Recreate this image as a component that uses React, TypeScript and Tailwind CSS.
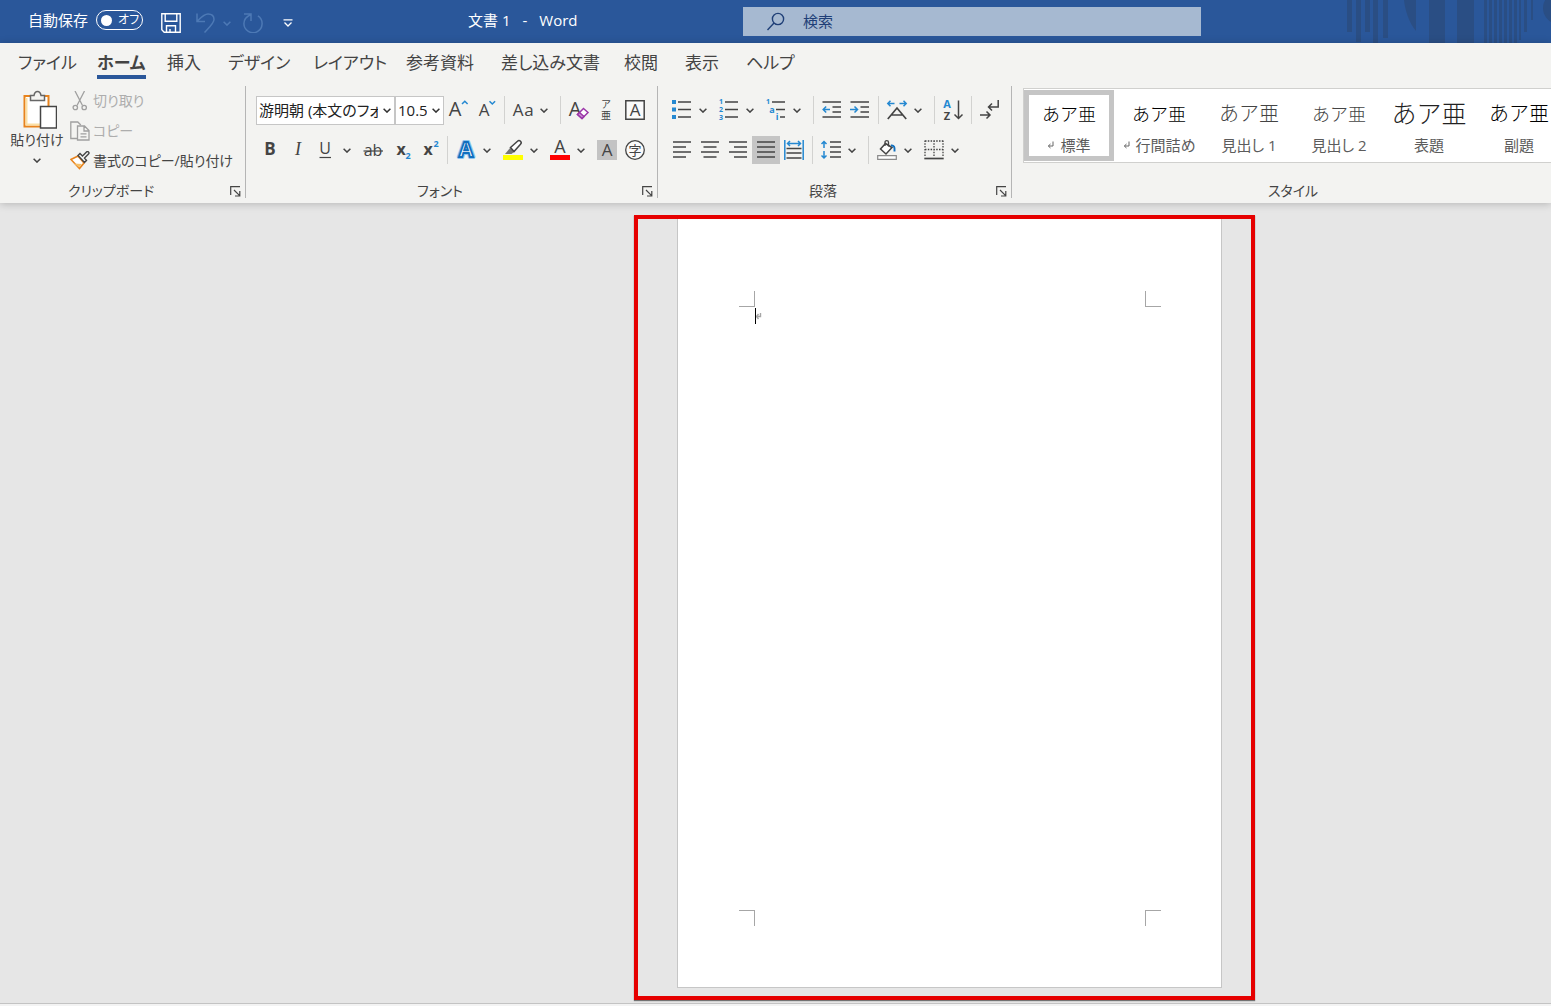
import type { ReactNode } from "react";

const tabs = [
  { name: "ファイル", width: "w-[79px]" },
  { name: "ホーム", width: "w-[70px]" },
  { name: "挿入", width: "w-[61px]" },
  { name: "デザイン", width: "w-[85px]" },
  { name: "レイアウト", width: "w-[93px]" },
  { name: "参考資料", width: "w-[95px]" },
  { name: "差し込み文書", width: "w-[123px]" },
  { name: "校閲", width: "w-[61px]" },
  { name: "表示", width: "w-[61px]" },
  { name: "ヘルプ", width: "w-[61px]" },
];

const styles = [
  { name: "標準", mark: true, sample: "text-[18px] text-black" },
  { name: "行間詰め", mark: true, sample: "text-[18px] text-black" },
  { name: "見出し 1", mark: false, sample: "text-[20px] text-[#444]" },
  { name: "見出し 2", mark: false, sample: "text-[18px] text-[#444]" },
  { name: "表題", mark: false, sample: "text-[25px] text-[#222]" },
  { name: "副題", mark: false, sample: "text-[20px] text-black" },
];

const INK = "#444444";
const BLUE = "#2488d1";

const Icon = ({ children }: { children: ReactNode }) => (
  <svg
    className="size-5 shrink-0 overflow-visible"
    viewBox="0 0 20 20"
    fill="none"
    stroke={INK}
    strokeWidth="1.5"
  >
    {children}
  </svg>
);

type GlyphProps = {
  x: number;
  y: number;
  size: number;
  fill?: string;
  weight?: number;
  children: string;
};

const Glyph = ({ x, y, size, fill = INK, weight = 400, children }: GlyphProps) => (
  <text x={x} y={y} fontSize={size} fontWeight={weight} fill={fill} stroke="none" textAnchor="middle">
    {children}
  </text>
);

const Chevron = () => (
  <svg className="h-[5px] w-2 shrink-0" viewBox="0 0 8 5" fill="none" stroke="currentColor" strokeWidth="1.5">
    <path d="M.6.8 4 4.1 7.4.8" />
  </svg>
);

const Tool = ({ label, active, children }: { label: string; active?: boolean; children: ReactNode }) => (
  <button
    aria-label={label}
    className={
      active
        ? "flex h-7 w-7 shrink-0 items-center justify-center bg-[#c5c5c5]"
        : "flex h-7 w-7 shrink-0 items-center justify-center hover:bg-[#dcdcdc]"
    }
  >
    {children}
  </button>
);

// icon with a drop-down arrow on its right
const SplitTool = ({ label, children }: { label: string; children: ReactNode }) => (
  <button
    aria-label={label}
    className="flex h-7 w-[47px] shrink-0 items-center gap-[7px] pl-1 text-[#444] hover:bg-[#dcdcdc]"
  >
    {children}
    <Chevron />
  </button>
);

const Separator = () => <div className="mx-1 h-7 w-px shrink-0 bg-[#d2d2d0]" />;

const Launcher = ({ label }: { label: string }) => (
  <button aria-label={label} className="mr-1 flex size-[11px] shrink-0">
    <svg viewBox="0 0 11 11" className="size-[11px]" fill="none" stroke={INK} strokeWidth="1.2">
      <path d="M.7 9V.7H10M4 4l5.4 5.4M9.8 5v5H5" />
    </svg>
  </button>
);

type GroupProps = { title: string; className: string; launcher?: boolean; children: ReactNode };

const Group = ({ title, className, launcher, children }: GroupProps) => (
  <section className={className}>
    <div className="h-[94px]">{children}</div>
    <div className="flex h-[22px] items-center text-[14px] leading-[22px] text-[#444]">
      <h2 className="flex-1 pr-2 text-center">{title}</h2>
      {launcher && <Launcher label={title + "の設定"} />}
    </div>
  </section>
);

const Combo = ({ label, value, className }: { label: string; value: string; className: string }) => (
  <div className={className}>
    <select
      aria-label={label}
      className="h-full w-full appearance-none border border-[#c6c6c6] bg-white pr-4 pl-[2px] text-[15px] text-[#222]"
    >
      <option>{value}</option>
    </select>
    <span className="pointer-events-none absolute inset-y-0 right-1 flex items-center text-[#333]">
      <Chevron />
    </span>
  </div>
);

const ReturnMark = () => (
  <svg className="h-2 w-[7px] shrink-0" viewBox="0 0 7 8" fill="none" stroke="#666" strokeWidth="1">
    <path d="M6 .5v4.500H1.500M3.500 3 1.300 5l2.200 2" />
  </svg>
);

const TitleBar = () => (
  <header className="flex h-[43px] overflow-hidden bg-[#2a579a] text-[15px] text-white">
    <div className="flex w-[468px] shrink-0 items-center pb-[3px] pl-7">
      <label htmlFor="autosave" className="w-[68px] leading-5">
        自動保存
      </label>
      <button
        id="autosave"
        role="switch"
        aria-checked="false"
        className="flex h-5 w-[47px] items-center gap-[6px] rounded-full border border-white pl-1 text-[12px] leading-[18px] whitespace-nowrap"
      >
        <span className="size-[11px] shrink-0 rounded-full bg-white" />
        オフ
      </button>
      <div className="ml-[18px] flex items-center pt-[6px]">
        <button aria-label="上書き保存">
          <svg className="h-5 w-5" viewBox="0 0 20 20" fill="none" stroke="#fff" strokeWidth="1.4">
            <path d="M.8.8h18.400v18.400H3.200L.8 16.800zM4.200.8v7.500h11.600V.8M5.500 19v-6.300h9V19M9 19v-3" />
          </svg>
        </button>
        <button aria-label="元に戻す" className="ml-[15px] flex items-center gap-[7px] text-[#4d79b5]">
          <svg className="h-5 w-5" viewBox="0 0 20 20" fill="none" stroke="currentColor" strokeWidth="1.5">
            <path d="M1 .5v8h8M1.300 8.200C5 4.500 8 1 12 1c4 0 6 2.500 6 5.500 0 3.500-3.500 6.500-9.500 13" />
          </svg>
          <Chevron />
        </button>
        <button aria-label="やり直し" className="ml-3 text-[#4d79b5]">
          <svg className="h-5 w-5" viewBox="0 0 20 20" fill="none" stroke="currentColor" strokeWidth="1.5">
            <path d="M1 .9h7v7M7.800 1.500C3.500 3.500.9 6.800.9 10.500a9.100 9.100 0 1 0 14-7.600" />
          </svg>
        </button>
        <button aria-label="クイック アクセスのカスタマイズ" className="ml-5">
          <svg className="h-2 w-[10px]" viewBox="0 0 10 8" fill="none" stroke="#fff" strokeWidth="1.3">
            <path d="M.5.8h9M1.500 3.500 5 7l3.500-3.500" />
          </svg>
        </button>
      </div>
    </div>
    <h1 className="flex w-[275px] shrink-0 gap-3 self-center pb-[3px] leading-5">
      <span>文書 1</span>
      <span>-</span>
      <span>Word</span>
    </h1>
    <div className="flex h-[29px] w-[458px] shrink-0 items-center gap-4 self-center bg-[#a6b9d1] pl-6 text-[#1f3f77]">
      <svg className="h-5 w-5 shrink-0" viewBox="0 0 20 20" fill="none" stroke="#1f3f77" strokeWidth="1.4">
        <circle cx="11" cy="7" r="5.600" />
        <path d="M7 11 .5 18" />
      </svg>
      <input
        aria-label="検索"
        placeholder="検索"
        className="w-full bg-transparent text-[15px] outline-none placeholder:text-[#1f3f77]"
      />
    </div>
    <svg className="ml-auto h-[43px] w-[204px] shrink-0" viewBox="0 0 204 43" fill="#2a4e84">
      <path d="M0 0h5v32H0zM9 0h5v42H9zM18 0h5v32h-5zM26 0h5v43h-5zM36 0h5v38h-5z" />
      <path d="M57 0h12v31C62 23 58 10 57 0zM82 0h16v43H82zM110 0h17v43h-17z" />
      <path d="M137 0h3v43h-3zM142 0h3v43h-3zM147 0h3v43h-3zM152 0h3v43h-3zM157 0h3v43h-3zM162 0h3v43h-3zM167 0h3v43h-3z" />
      <path d="M172 0h2v40h-2zM177 0h3v32h-3zM184 0h2v20h-2z" />
      <circle cx="212" cy="8" r="16" />
    </svg>
  </header>
);

const ClipboardGroup = () => (
  <Group title="クリップボード" launcher className="w-[246px] shrink-0 border-r border-[#b5b5b5]">
    <div className="flex text-[14px] text-[#444]">
      <button className="flex w-[70px] flex-col items-center pt-1 pl-1 leading-5">
        <svg className="size-10" viewBox="-5 0 40 40" fill="none">
          <path d="M2.500 6h24v30.500h-24z" fill="#fff" stroke="#e8831d" strokeWidth="2" />
          <path d="M4.500 8v26.500H18" stroke="#fbe0a5" strokeWidth="2" />
          <path d="M8.500 5.500h3.500c.5-3 2.500-4 3.500-4s3 1 3.500 4h3.500v5h-14z" fill="#f3f3f1" stroke="#666" strokeWidth="1.500" />
          <path d="M18.500 16.500h16v21.500h-16z" fill="#fff" stroke="#444" strokeWidth="1.500" />
        </svg>
        <span className="whitespace-nowrap">貼り付け</span>
        <span className="flex h-5 items-center">
          <Chevron />
        </span>
      </button>
      <div className="flex flex-col leading-[30px]">
        <button disabled className="flex h-[30px] items-center gap-[3px] text-[#adadad]">
          <svg className="size-5" viewBox="0 0 20 20" fill="none" stroke="#a0a0a0" strokeWidth="1.300">
            <path d="M5 0l7.500 14.500M14.500 0 7 14.500" />
            <circle cx="5.300" cy="16.500" r="2.200" />
            <circle cx="14.200" cy="16.500" r="2.200" />
          </svg>
          切り取り
        </button>
        <button disabled className="flex h-[30px] items-center gap-[3px] text-[#adadad]">
          <svg className="size-5" viewBox="0 0 20 20" fill="none" stroke="#a0a0a0" strokeWidth="1.300">
            <path d="M7 17.500H.8V1h7l3 3" />
            <path d="M7.500 5h7l4.500 4.500V19H7.500zM14 5v5h5M10.500 12.800h6M10.500 15.800h6" />
          </svg>
          コピー
        </button>
        <button className="flex h-[30px] items-center gap-[3px]">
          <svg className="size-5" viewBox="0 0 20 20" fill="none">
            <path d="M8 5 1 8.500l8.500 9L14 12z" fill="#fff" stroke="#e8831d" strokeWidth="1.600" />
            <path d="M4 12.500l8 .5-3 3.500z" fill="#f5c06a" />
            <path d="M8 4.500 10 2.500l2.500 2.500 4-4a1.300 1.300 0 0 1 2 2L14.500 7l2 2.500-2 2z" fill="#f3f3f1" stroke="#444" strokeWidth="1.400" />
          </svg>
          書式のコピー/貼り付け
        </button>
      </div>
    </div>
  </Group>
);

const FontGroup = () => (
  <Group title="フォント" launcher className="w-[412px] shrink-0 border-r border-[#b5b5b5]">
    <div className="flex flex-col gap-3 pt-[10px] pl-[10px]">
      <div className="flex h-7 items-center">
        <Combo label="フォント" value="游明朝 (本文のフォント)" className="relative h-[29px] w-[139px] shrink-0" />
        <Combo label="フォント サイズ" value="10.5" className="relative h-[29px] w-[49px] shrink-0" />
        <Tool label="フォント サイズの拡大">
          <Icon>
            <Glyph x={7} y={16} size={20}>A</Glyph>
            <path d="M14 4l2.800-2.800L19.600 4" stroke={BLUE} />
          </Icon>
        </Tool>
        <Tool label="フォント サイズの縮小">
          <Icon>
            <Glyph x={8} y={16} size={17}>A</Glyph>
            <path d="M13.500 1.200 16.300 4l2.800-2.800" stroke={BLUE} />
          </Icon>
        </Tool>
        <Separator />
        <SplitTool label="文字種の変換">
          <Icon>
            <Glyph x={5} y={16} size={17}>A</Glyph>
            <Glyph x={16} y={16} size={17}>a</Glyph>
          </Icon>
        </SplitTool>
        <Separator />
        <Tool label="すべての書式をクリア">
          <Icon>
            <Glyph x={6} y={16} size={20}>A</Glyph>
            <path d="M14.500 8.500l4.500 4-6 6-4.500-4z" fill="#fff" stroke="#9b35a8" />
            <path d="M10.500 12.500l4.500 4-2 2-4.500-4z" fill="#c98fd1" stroke="#9b35a8" />
          </Icon>
        </Tool>
        <Tool label="ルビ">
          <Icon>
            <Glyph x={9} y={8} size={10}>ア</Glyph>
            <Glyph x={9} y={19} size={10}>亜</Glyph>
          </Icon>
        </Tool>
        <Tool label="囲み線">
          <Icon>
            <path d="M.8.8h18.400v18.400H.8z" fill="#fafafa" />
            <Glyph x={10} y={16} size={17}>A</Glyph>
          </Icon>
        </Tool>
      </div>
      <div className="flex h-7 items-center">
        <Tool label="太字">
          <Icon>
            <Glyph x={10} y={15} size={17} weight={700}>B</Glyph>
          </Icon>
        </Tool>
        <Tool label="斜体">
          <Icon>
            <text x="10" y="15" fontSize="18" fontStyle="italic" fontFamily="Liberation Serif, serif" textAnchor="middle" fill={INK} stroke="none">
              I
            </text>
          </Icon>
        </Tool>
        <SplitTool label="下線">
          <Icon>
            <Glyph x={9} y={14} size={16}>U</Glyph>
            <path d="M3.500 17.500h11.500" strokeWidth="1.200" />
          </Icon>
        </SplitTool>
        <Tool label="取り消し線">
          <Icon>
            <Glyph x={10} y={16} size={16}>ab</Glyph>
            <path d="M.5 11h19.500" strokeWidth="1.200" />
          </Icon>
        </Tool>
        <Tool label="下付き">
          <Icon>
            <Glyph x={10} y={15} size={16} weight={700}>x</Glyph>
            <Glyph x={17} y={19} size={9} weight={700} fill={BLUE}>2</Glyph>
          </Icon>
        </Tool>
        <Tool label="上付き">
          <Icon>
            <Glyph x={9} y={15} size={16} weight={700}>x</Glyph>
            <Glyph x={17} y={7} size={9} weight={700} fill={BLUE}>2</Glyph>
          </Icon>
        </Tool>
        <Separator />
        <SplitTool label="文字の効果と体裁">
          <Icon>
            <text x="10" y="17" fontSize="21" fontWeight="700" textAnchor="middle" stroke="#8fc4ee" strokeWidth="4" strokeLinejoin="round">
              A
            </text>
            <text x="10" y="17" fontSize="21" fontWeight="700" textAnchor="middle" fill="#fff" stroke="#116fbe" strokeWidth="1.800">
              A
            </text>
          </Icon>
        </SplitTool>
        <SplitTool label="蛍光ペンの色">
          <Icon>
            <path d="M0 15h20v5H0z" fill="#ffff00" stroke="none" />
            <path d="M2 14l5-6 4 4-2.500 2z" fill="#777" stroke="none" />
            <path d="M7.500 7.500 14.500 1.200a2 2 0 0 1 3 3L11 11.500z" fill="#fff" />
          </Icon>
        </SplitTool>
        <SplitTool label="フォントの色">
          <Icon>
            <path d="M0 15h20v5H0z" fill="#ff0000" stroke="none" />
            <Glyph x={10} y={13} size={18}>A</Glyph>
          </Icon>
        </SplitTool>
        <Tool label="文字の網かけ">
          <Icon>
            <path d="M0 0h20v20H0z" fill="#c3c3c3" stroke="none" />
            <Glyph x={10} y={16} size={17}>A</Glyph>
          </Icon>
        </Tool>
        <Tool label="囲い文字">
          <Icon>
            <circle cx="10" cy="10" r="9.300" fill="#fafafa" strokeWidth="1.300" />
            <Glyph x={10} y={15} size={13}>字</Glyph>
          </Icon>
        </Tool>
      </div>
    </div>
  </Group>
);

const ParagraphGroup = () => (
  <Group title="段落" launcher className="w-[354px] shrink-0 border-r border-[#b5b5b5]">
    <div className="flex flex-col gap-3 pt-[10px] pl-[10px]">
      <div className="flex h-7 items-center">
        <SplitTool label="箇条書き">
          <Icon>
            <path d="M0 0h4v4H0zM0 7.500h4v4H0zM0 15h4v4H0z" fill={BLUE} stroke="none" />
            <path d="M6 2h13M6 9.500h13M6 17h13" />
          </Icon>
        </SplitTool>
        <SplitTool label="段落番号">
          <Icon>
            <Glyph x={2} y={4} size={7} weight={700} fill={BLUE}>1</Glyph>
            <Glyph x={2} y={12} size={7} weight={700} fill={BLUE}>2</Glyph>
            <Glyph x={2} y={20} size={7} weight={700} fill={BLUE}>3</Glyph>
            <path d="M6 2h13M6 9.500h13M6 17h13" />
          </Icon>
        </SplitTool>
        <SplitTool label="アウトライン">
          <Icon>
            <Glyph x={2} y={4} size={7} weight={700} fill={BLUE}>1</Glyph>
            <Glyph x={6} y={13} size={9} weight={700} fill={BLUE}>a</Glyph>
            <Glyph x={11} y={20} size={9} weight={700} fill={BLUE}>i</Glyph>
            <path d="M6 2h13M10 9.500h9M14 17h5" />
          </Icon>
        </SplitTool>
        <Separator />
        <Tool label="インデントを減らす">
          <Icon>
            <path d="M.5 2h18.500M10.500 7h8.500M10.500 12h8.500M.5 17h18.500" />
            <path d="M8 9.500H1.200M4.200 6.500l-3 3 3 3" stroke={BLUE} />
          </Icon>
        </Tool>
        <Tool label="インデントを増やす">
          <Icon>
            <path d="M.5 2h18.500M10.500 7h8.500M10.500 12h8.500M.5 17h18.500" />
            <path d="M0 9.500h7.500M4.500 6.500l3 3-3 3" stroke={BLUE} />
          </Icon>
        </Tool>
        <Separator />
        <SplitTool label="拡張書式">
          <Icon>
            <path d="M.8 19 10 8l9.200 11M4.500 15h11" strokeWidth="1.700" />
            <path d="M7.500 3.500H.8M3.500.8.8 3.500l2.700 2.700M12.500 3.500h6.700M16.500.8l2.700 2.700-2.700 2.700" stroke={BLUE} />
          </Icon>
        </SplitTool>
        <Separator />
        <Tool label="並べ替え">
          <Icon>
            <Glyph x={4} y={8} size={11} weight={700} fill={BLUE}>A</Glyph>
            <Glyph x={4} y={20} size={11} weight={700}>Z</Glyph>
            <path d="M15.500.5v18M11.500 14.500l4 4 4-4" />
          </Icon>
        </Tool>
        <Separator />
        <Tool label="編集記号の表示">
          <Icon>
            <path d="M18.200 0v7H9M12 3.500 8.500 7l3.500 3.500M0 15h10M6.500 11.500 10 15l-3.500 3.500" />
          </Icon>
        </Tool>
      </div>
      <div className="flex h-7 items-center">
        <Tool label="左揃え">
          <Icon>
            <path d="M1 2h18M1 7h13M1 12h18M1 17h13" />
          </Icon>
        </Tool>
        <Tool label="中央揃え">
          <Icon>
            <path d="M1 2h18M3.500 7h13M1 12h18M3.500 17h13" />
          </Icon>
        </Tool>
        <Tool label="右揃え">
          <Icon>
            <path d="M1 2h18M6 7h13M1 12h18M6 17h13" />
          </Icon>
        </Tool>
        <Tool label="両端揃え" active>
          <Icon>
            <path d="M1 2h18M1 7h18M1 12h18M1 17h18" />
          </Icon>
        </Tool>
        <Tool label="均等割り付け">
          <Icon>
            <path d="M2.500 8.500h15M2.500 13h15M2.500 18h15" />
            <path d="M.8 0v20M19.200 0v20M3.500 3.500h13M6 1 3.500 3.500 6 6M14 1l2.500 2.500L14 6" stroke={BLUE} />
          </Icon>
        </Tool>
        <Separator />
        <SplitTool label="行と段落の間隔">
          <Icon>
            <path d="M9 2h11M9 7h11M9 12h11M9 17h11" />
            <path d="M3 1.500v6.500M.5 4 3 1.500 5.500 4M3 11v7M.5 15.500 3 18l2.500-2.500" stroke={BLUE} />
          </Icon>
        </SplitTool>
        <Separator />
        <SplitTool label="塗りつぶし">
          <Icon>
            <path d="M.7 15.700h18.600v3.600H.7z" fill="#fff" stroke="#8a8a8a" strokeWidth="1.200" />
            <path d="M8.500 3.500 3.500 9l5.500 5 6-6.500z" fill="#fff" />
            <path d="M8 6V2.200c0-2 3.500-2 3.500 0V6.500" strokeWidth="1.300" />
            <path d="M14 5.500c3-.5 4 1.500 3.500 6" stroke="#116fbe" strokeWidth="2" />
          </Icon>
        </SplitTool>
        <SplitTool label="罫線">
          <Icon>
            <path d="M1 1h18M1 9.500h18M1 .5V17M10 .5V17M19 .5V17" strokeWidth="1.300" strokeDasharray="1.500 1.300" />
            <path d="M.3 18.500h19.400" strokeWidth="1.700" />
          </Icon>
        </SplitTool>
      </div>
    </div>
  </Group>
);

const StylesGroup = () => (
  <Group title="スタイル" className="w-[570px] shrink-0">
    <div className="pt-[2px] pl-[11px]">
      <ul className="flex h-[75px] border border-r-0 border-[#d0d0ce] bg-white py-px">
        {styles.map((style, i) => (
          <li key={style.name} className="w-[90px] shrink-0">
            <button
              className={
                i === 0
                  ? "flex h-[71px] w-full flex-col items-center border-[5px] border-[#c5c5c5]"
                  : "flex h-[71px] w-full flex-col items-center border-[5px] border-transparent"
              }
            >
              <span className="flex h-[38px] shrink-0 items-center whitespace-nowrap font-light [font-feature-settings:normal]">
                <span className={style.sample}>あア亜</span>
              </span>
              <span className="flex h-6 shrink-0 items-center gap-[6px] whitespace-nowrap text-[15px] leading-6 text-[#5c5c5c]">
                {style.mark && <ReturnMark />}
                {style.name}
              </span>
            </button>
          </li>
        ))}
      </ul>
    </div>
  </Group>
);

// margin marks of the printed page
const Corner = ({ className }: { className: string }) => <span className={className} />;

const Page = () => (
  <article className="flex h-[769px] w-[545px] flex-col border border-t-0 border-[#c6c6c6] bg-white pt-[72px] pr-[60px] pb-[61px] pl-[61px]">
    <div className="flex justify-between">
      <Corner className="size-4 border-r border-b border-[#a6a6a6]" />
      <Corner className="size-4 border-b border-l border-[#a6a6a6]" />
    </div>
    <div className="flex flex-1 items-start pt-px pl-4">
      <span className="h-4 w-px bg-black" />
      <svg className="mt-1 h-2 w-[6px]" viewBox="0 0 6 8" fill="none" stroke="#a6a6a6" strokeWidth="1.400">
        <path d="M4.500 1v3.500H0M2.500 2l-2 2.500 2 2.500" />
      </svg>
    </div>
    <div className="flex justify-between">
      <Corner className="size-4 border-t border-r border-[#a6a6a6]" />
      <Corner className="size-4 border-t border-l border-[#a6a6a6]" />
    </div>
  </article>
);

export default function App() {
  return (
    <div className="flex min-h-screen flex-col overflow-hidden bg-[#e6e6e6] font-['Open_Sans','Noto_Sans_CJK_JP',sans-serif] [font-feature-settings:'palt']">
      <TitleBar />

      <div className="z-10 bg-[#f3f3f1] shadow-[0_1px_8px_rgba(0,0,0,0.22)]">
        <nav className="flex h-[43px] items-start pt-2 pl-[18px] text-[17px] leading-6 text-[#444]">
          {tabs.map((tab) => (
            <div key={tab.name} className={"shrink-0 whitespace-nowrap " + tab.width}>
              <a
                href="#"
                className={
                  tab.name === "ホーム"
                    ? "inline-block border-b-4 border-[#2a579a] font-bold"
                    : "inline-block border-b-4 border-transparent"
                }
              >
                {tab.name}
              </a>
            </div>
          ))}
        </nav>
        <div className="flex h-[117px] overflow-hidden pb-[5px]">
          <ClipboardGroup />
          <FontGroup />
          <ParagraphGroup />
          <StylesGroup />
        </div>
      </div>

      <main className="flex flex-1 items-start pt-3 pl-[634px]">
        <div className="shrink-0 border-4 border-[#e60000] pr-[29px] pb-2 pl-[39px] shadow-[0_1px_1px_rgba(0,0,0,0.5)]">
          <Page />
        </div>
      </main>

      <footer className="h-[3px] border-t border-[#c3c3c3] bg-[#f3f3f3]" />
    </div>
  );
}
